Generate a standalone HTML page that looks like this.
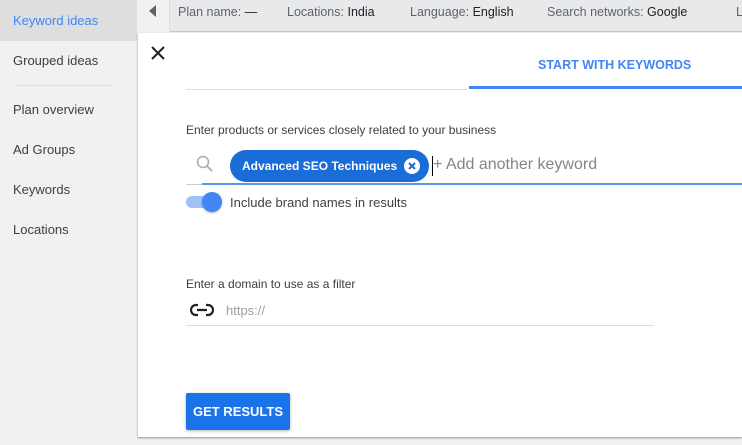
<!DOCTYPE html>
<html><head><style>
*{margin:0;padding:0;box-sizing:border-box}
body{width:742px;height:445px;overflow:hidden;font-family:"Liberation Sans",Arial,sans-serif;background:#f1f1f1;position:relative;font-size:13px;color:#202124}
.side{position:absolute;left:0;top:0;width:137px;height:445px;background:#f1f1f1}
.side .it{position:absolute;left:13px;font-size:13px;color:#3c4043}
.sel{position:absolute;left:0;top:0;width:137px;height:41px;background:#dedede}
.top{position:absolute;left:137px;top:0;width:605px;height:32px;background:#e8e9eb;border-bottom:1px solid #c8c8c8}
.top .arr{position:absolute;left:0;top:0;width:33px;height:32px;background:#f1f1f1;border-right:1px solid #ddd}
.top span{position:absolute;top:5px;font-size:12.5px;color:#5f6368;white-space:nowrap}
.top b{font-weight:normal;color:#202124}
.panel{position:absolute;left:138px;top:33px;width:604px;height:404px;background:#fff;box-shadow:0 1px 2px rgba(0,0,0,.4)}
.abs{position:absolute}
</style></head><body>
<div class="side">
<div class="sel"></div>
<div class="it" style="top:13px;color:#4285f4">Keyword ideas</div>
<div class="it" style="top:53px">Grouped ideas</div>
<div class="it" style="top:85px;left:17px;width:96px;height:1px;background:#ddd"></div>
<div class="it" style="top:102px">Plan overview</div>
<div class="it" style="top:142px">Ad Groups</div>
<div class="it" style="top:182px">Keywords</div>
<div class="it" style="top:222px">Locations</div>
</div>
<div class="top">
<div class="arr"><svg width="33" height="32"><polygon points="19,5 19,17 12,11" fill="#5f6368"/></svg></div>
<span style="left:41px">Plan name: <b>—</b></span>
<span style="left:150px">Locations: <b>India</b></span>
<span style="left:273px">Language: <b>English</b></span>
<span style="left:410px">Search networks: <b>Google</b></span>
<span style="left:599px">Last</span>
</div>
<div class="panel">
<svg class="abs" style="left:12px;top:12px" width="16" height="16"><path d="M2 2L14 14M14 2L2 14" stroke="#202124" stroke-width="2"/></svg>
<div class="abs" style="left:48px;top:56px;width:281px;height:1px;background:#ddd"></div>
<div class="abs" style="left:400px;top:25px;font-size:12.5px;font-weight:bold;color:#4285f4">START WITH KEYWORDS</div>
<div class="abs" style="left:331px;top:53px;width:273px;height:3px;background:#4285f4"></div>
<div class="abs" style="left:48px;top:90px;font-size:12px;color:#3c4043">Enter products or services closely related to your business</div>
<svg class="abs" style="left:57px;top:121px" width="20" height="20"><circle cx="8" cy="8" r="5.5" fill="none" stroke="#aaa" stroke-width="1.5"/><path d="M12 12L17 17" stroke="#aaa" stroke-width="1.8"/></svg>
<div class="abs" style="left:92px;top:117px;width:199px;height:32px;border-radius:16px;background:#1a6dd7;color:#fff;font-weight:bold;font-size:12px;line-height:32px;padding-left:12px;white-space:nowrap">Advanced SEO Techniques</div>
<svg class="abs" style="left:264px;top:123px" width="20" height="20"><circle cx="10" cy="10" r="8" fill="#fff"/><path d="M7 7L13 13M13 7L7 13" stroke="#1a6dd7" stroke-width="2"/></svg>
<div class="abs" style="left:294px;top:123px;width:1px;height:20px;background:#000"></div>
<div class="abs" style="left:295px;top:123px;font-size:16px;color:#80868b">+ Add another keyword</div>
<div class="abs" style="left:48px;top:151px;width:16px;height:1px;background:#ccc"></div>
<div class="abs" style="left:64px;top:150px;width:540px;height:2px;background:#5c95e8"></div>
<div class="abs" style="left:48px;top:163px;width:34px;height:12px;border-radius:6px;background:#9fc1f5"></div>
<div class="abs" style="left:64px;top:159px;width:20px;height:20px;border-radius:50%;background:#4285f4;box-shadow:0 1px 2px rgba(0,0,0,.3)"></div>
<div class="abs" style="left:92px;top:162px;font-size:13px;color:#3c4043">Include brand names in results</div>
<div class="abs" style="left:48px;top:244px;font-size:12px;color:#3c4043">Enter a domain to use as a filter</div>
<svg class="abs" style="left:52px;top:269px" width="24" height="16"><path d="M8 3H6a5 5 0 0 0 0 10h2M16 3h2a5 5 0 0 1 0 10h-2M7 8h10" fill="none" stroke="#202124" stroke-width="2.2"/></svg>
<div class="abs" style="left:88px;top:270px;font-size:13px;color:#9aa0a6">https://</div>
<div class="abs" style="left:48px;top:292px;width:468px;height:1px;background:#ddd"></div>
<div class="abs" style="left:48px;top:360px;width:104px;height:37px;background:#1a73e8;border-radius:2px;box-shadow:0 1px 3px rgba(0,0,0,.3);color:#fff;font-weight:bold;font-size:13px;line-height:37px;text-align:center">GET RESULTS</div>
</div>
</body></html>
